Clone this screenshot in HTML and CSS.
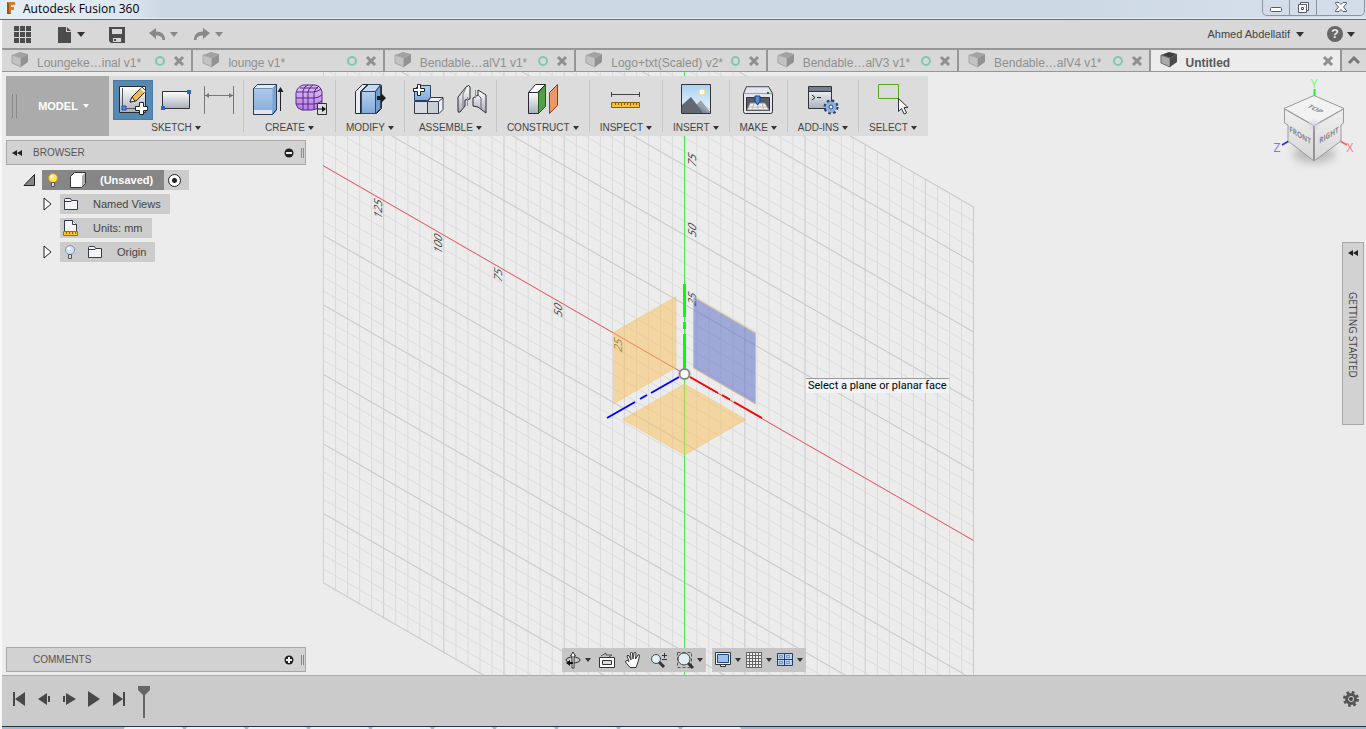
FILE: index.html
```html
<!doctype html>
<html lang="en">

<head>
    <meta charset="utf-8">
    <title>Autodesk Fusion 360</title>
    <link rel="stylesheet" href="styles.css">
</head>

<body>
    <!-- shared shapes -->
    <svg class="defs" aria-hidden="true">
        <defs>
            <linearGradient id="blue" x1="0" y1="0" x2="0" y2="1"><stop offset="0" stop-color="#b4d0ee" /><stop offset="1" stop-color="#83a9d8" /></linearGradient>
            <linearGradient id="steel" x1="0" y1="0" x2="0" y2="1"><stop offset="0" stop-color="#fff" /><stop offset="1" stop-color="#a9afbc" /></linearGradient>
            <linearGradient id="sky" x1="0" y1="0" x2="0" y2="1"><stop offset="0" stop-color="#a9d2ee" /><stop offset="1" stop-color="#eef8fc" /></linearGradient>
            <linearGradient id="purple" x1="0" y1="0" x2="0" y2="1"><stop offset="0" stop-color="#dcc3f0" /><stop offset="1" stop-color="#b67fe6" /></linearGradient>
            <linearGradient id="face" x1="0" y1="0" x2="0" y2="1"><stop offset="0" stop-color="#efefef" /><stop offset="1" stop-color="#d8d8d8" /></linearGradient>
            <symbol id="part" viewBox="0 0 18 16">
                <path d="M1 3 9 0l8 2-7 4z" fill="#a2a2a2" />
                <path d="m1 3 9 3v9l-9-4z" fill="#c2c2c2" stroke="#a5a5a5" />
                <path d="m10 6 7-4v8l-7 5z" fill="#929292" />
            </symbol>
            <symbol id="cross" viewBox="0 0 12 12"><path d="m2 2 8 8m0-8-8 8" stroke="currentColor" stroke-width="3" /></symbol>
            <symbol id="folder" viewBox="0 0 16 16">
                <path d="M1.500 13.500v-10q0-1 1-1h5l1 2h6v9z" fill="#f4f5f8" stroke="#383c46" />
                <path d="M2 5.500h6l1-1" fill="none" stroke="#383c46" />
            </symbol>
        </defs>
    </svg>

    <header class="titlebar">
        <svg class="logo" width="16" height="16" viewBox="0 0 16 16"><path fill="#dff1fa" d="M0 0h16v16H0z" /><path fill="#e0772b" d="M5 2h8v3H9v2h3v3H9v4H5z" /><path fill="#a64d16" d="m5 2 2 2v8l2 2H5z" /></svg>
        <h1>Autodesk Fusion 360</h1>
        <div class="window-buttons">
            <button aria-label="Minimize"><svg width="14" height="12" viewBox="0 0 14 12"><rect x="1.500" y="5.500" width="11" height="4" rx="1" fill="#fff" stroke="#555b6b" /></svg></button>
            <button aria-label="Restore"><svg width="12" height="12" viewBox="0 0 12 12"><g fill="#fff" stroke="#555b6b"><path d="M3.500.5h8v8h-8z" /><path d="M1.500 2.500h8v8h-8z" /><path d="M4.500 5.500h2v2h-2z" /></g></svg></button>
            <button aria-label="Close"><svg width="14" height="12" viewBox="0 0 14 12"><path d="M1.500.5h3.500l2 2 2-2h3.500v1l-3 3.500 3 3.500v1H9l-2-2-2 2H1.500v-1l3-3.500-3-3.500z" fill="#fff" stroke="#555b6b" /></svg></button>
        </div>
    </header>

    <nav class="toolbar" aria-label="Application">
        <button class="apps" aria-label="Data panel"><svg width="17" height="17" viewBox="0 0 17 17"><path fill="#4c4c4c" d="M0 0h5v5H0zm6 0h5v5H6zm6 0h5v5h-5zM0 6h5v5H0zm6 0h5v5H6zm6 0h5v5h-5zM0 12h5v5H0zm6 0h5v5H6zm6 0h5v5h-5z" /></svg></button>
        <button class="drop file" aria-label="File"><svg width="16" height="17" viewBox="0 0 16 17"><path fill="#4c4c4c" d="M1 1h8v5h5v11H1zM10 1l4 4h-4z" /></svg></button>
        <button class="save" aria-label="Save"><svg width="18" height="17" viewBox="0 0 18 17"><path fill="#4c4c4c" d="M1 1h16v16H3l-2-2z" /><path fill="#dadada" d="M4 3h10v5H4zm1 9h8v4H5z" /><path fill="#4c4c4c" d="M6 13h2v2H6z" /></svg></button>
        <button class="drop undo dim" aria-label="Undo"><svg width="18" height="14" viewBox="0 0 18 14"><path fill="#888" d="m1 6 7-5v3.500c6 0 9 3 9 8.500h-2.500c0-3-2-4.500-6.500-4.500V12z" /></svg></button>
        <button class="drop redo dim" aria-label="Redo"><svg width="18" height="14" viewBox="0 0 18 14"><path fill="#888" d="m17 6-7-5v3.500c-6 0-9 3-9 8.500h2.500c0-3 2-4.500 6.500-4.500V12z" /></svg></button>
        <button class="drop user">Ahmed Abdellatif</button>
        <button class="drop help" aria-label="Help"><span class="help-mark">?</span></button>
    </nav>

    <div class="tabs">
        <div class="tab"><svg class="part" width="18" height="16"><use href="#part" /></svg><a href="#">Loungeke…inal v1*</a><i class="dot"></i><button aria-label="Close tab"><svg width="12" height="12"><use href="#cross" /></svg></button></div>
        <div class="tab"><svg class="part" width="18" height="16"><use href="#part" /></svg><a href="#">lounge v1*</a><i class="dot"></i><button aria-label="Close tab"><svg width="12" height="12"><use href="#cross" /></svg></button></div>
        <div class="tab"><svg class="part" width="18" height="16"><use href="#part" /></svg><a href="#">Bendable…alV1 v1*</a><i class="dot"></i><button aria-label="Close tab"><svg width="12" height="12"><use href="#cross" /></svg></button></div>
        <div class="tab"><svg class="part" width="18" height="16"><use href="#part" /></svg><a href="#">Logo+txt(Scaled) v2*</a><i class="dot"></i><button aria-label="Close tab"><svg width="12" height="12"><use href="#cross" /></svg></button></div>
        <div class="tab"><svg class="part" width="18" height="16"><use href="#part" /></svg><a href="#">Bendable…alV3 v1*</a><i class="dot"></i><button aria-label="Close tab"><svg width="12" height="12"><use href="#cross" /></svg></button></div>
        <div class="tab"><svg class="part" width="18" height="16"><use href="#part" /></svg><a href="#">Bendable…alV4 v1*</a><i class="dot"></i><button aria-label="Close tab"><svg width="12" height="12"><use href="#cross" /></svg></button></div>
        <div class="tab active"><svg class="part" width="18" height="16" viewBox="0 0 18 16"><path d="M1 3 9 0l8 2-7 4z" fill="#3d3d3d" /><path d="m1 3 9 3v9l-9-4z" fill="#aaa" stroke="#666" /><path d="m10 6 7-4v8l-7 5z" fill="#4c4c4c" /></svg><a href="#">Untitled</a><button aria-label="Close tab"><svg width="12" height="12"><use href="#cross" /></svg></button></div>
        <button class="more" aria-label="Collapse"><svg width="14" height="9" viewBox="0 0 14 9"><path d="m2 7 5-5 5 5" fill="none" stroke="#777" stroke-width="3" /></svg></button>
    </div>

    <main class="workspace">
        <!-- sketch grid and origin planes -->
        <svg class="scene" viewBox="2 72 1364 603" preserveAspectRatio="xMidYMid slice">
            <g transform="matrix(1 .5765 0 1 684.500 374)" fill="none">
                <path class="fine" d="M-361.500 42.500H289" stroke-width="751" stroke-dasharray="1 11.040" />
                <path class="fine" d="M-36-334.100V417.500" stroke-width="650" stroke-dasharray="1 12.900" />
                <path class="bold upright" d="M-361.700 42.500H289" stroke-width="751" stroke-dasharray="1 59.200" />
                <path class="bold" d="M-36-278.500V418" stroke-width="650" stroke-dasharray="1 68.500" />
                <path class="bold" d="M-361-333.600H289V450" stroke-width="1" />
            </g>
            <path d="M323 165.500 973.500 540.500" stroke="#f25c5c" />
            <path d="M684.500 72v603" stroke="#54e354" />
            <g class="scale">
                <text transform="matrix(0 -1 1 .577 382 220)">125</text>
                <text transform="matrix(0 -1 1 .577 442 255)">100</text>
                <text transform="matrix(0 -1 1 .577 502 283)">75</text>
                <text transform="matrix(0 -1 1 .577 562 318)">50</text>
                <text transform="matrix(0 -1 1 .577 622 353)">25</text>
                <text transform="matrix(0 -1 1 .577 696 168)">75</text>
                <text transform="matrix(0 -1 1 .577 696 238)">50</text>
                <text transform="matrix(0 -1 1 .577 696 307)">25</text>
            </g>
            <g fill="#f7be55" fill-opacity=".5" stroke="#f3c77c" stroke-opacity=".5">
                <path d="m613.500 332.500 62.500-36v71l-62.500 36.500z" />
                <path d="m684.500 384 61.500 35.500-61.500 35.500-62-35.500z" />
            </g>
            <path d="m693.500 297 62 36v71l-62-36z" fill="#4f66c4" fill-opacity=".5" stroke="#d8bf93" />
            <g fill="none" stroke-width="2">
                <path d="M684.500 284v33m0 5v7m0 5v35" stroke="#0f0" stroke-width="3" />
                <path d="m607 418 28-16m5-3 7-4m4-2 28-16" stroke="#00f" />
                <path d="m690 377 28 16m4 2 8 4.500m4 2.500 28 16" stroke="red" />
            </g>
            <circle cx="684.500" cy="374" r="5" fill="#fff" stroke="#888" stroke-width="2" />
        </svg>

        <div class="ribbon">
            <button class="workspace-switch drop">MODEL</button>
            <section class="group">
                <div class="tools">
                    <button class="on" aria-label="Create sketch"><svg width="32" height="32" viewBox="0 0 32 32"><path d="M2.500 2.500h26v26h-26z" fill="url(#steel)" stroke="#252a35" /><path d="M5.500 4v20M8 24.500h16" stroke="#555" /><path d="M5 22h4v4H5z" fill="#5590dd" stroke="#1e4fa0" /><path d="m13 18 2-5L25 3l4 4-10 10z" fill="#f4b942" stroke="#2d2923" /><path d="m24 4 4 4" stroke="#eee" stroke-width="2" /><path d="m13 18 2-5 3 4z" fill="#fff3d0" stroke="#333" /><path d="M22.500 18.500h4v4h4v4h-4v4h-4v-4h-4v-4h4z" fill="#fff" stroke="#222" /></svg></button>
                    <button aria-label="Rectangle"><svg width="32" height="32" viewBox="0 0 32 32"><path d="M2.500 7.500h27v17h-27z" fill="url(#steel)" stroke="#333" /><path d="M27 6h4v4h-4zM1 22h4v4H1z" fill="#2d63c8" /></svg></button>
                    <button aria-label="Sketch dimension"><svg width="32" height="32" viewBox="0 0 32 32"><path d="M1.500 2v28m29-28v28M2 11.500h28" stroke="#777" fill="none" /><path d="m2 11.500 4-2.500v5zm28 0L26 9v5z" fill="#777" /></svg></button>
                </div>
                <button class="drop label">SKETCH</button>
            </section>
            <section class="group">
                <div class="tools">
                    <button aria-label="Extrude"><svg width="32" height="32" viewBox="0 0 32 32"><path d="m1.500 4.500 4-4h19v25l-4 5h-19z" fill="url(#blue)" stroke="#283a57" /><path d="m1.500 4.500 4-4h19l-4 4z" fill="#deebf8" stroke="#7890ae" /><path d="m20.500 5 3.500-4v24l-3.500 4z" fill="#7ca3d3" /><path d="M2 26h18v4H2z" fill="#e4e6ea" /><path d="m1.500 4.500 4-4h19v25l-4 5h-19z" fill="none" stroke="#283a57" /><path d="M28.500 27V7" stroke="#222" /><path d="m28.500 3 3 5h-6z" fill="#222" /></svg></button>
                    <button aria-label="Create form"><svg width="32" height="32" viewBox="0 0 32 32"><path d="M8 1h12q6 1 7 7v10q-1 6-6 7l-4 1H7q-5-1-6-6V9q1-6 7-8z" fill="url(#purple)" stroke="#5b248f" /><path d="M2 8h16q4 0 8-3M1 14h18q4 0 8-3M1 20h18q4 0 8-3M8 26V7q1-5 5-6M13 26V8q1-5 5-7M19 26V9q1-5 5-7M5 4h18" fill="none" stroke="#5b248f" /><path d="M22.500 19.500h9v11h-9z" fill="#ddd" stroke="#333" /><path d="M23 25h5" stroke="#111" /><path d="m27 22 4 3-4 3z" fill="#111" /></svg></button>
                </div>
                <button class="drop label">CREATE</button>
            </section>
            <section class="group">
                <div class="tools">
                    <button aria-label="Press pull"><svg width="32" height="32" viewBox="0 0 32 32"><path d="m1.500 7.500 7-7h17l2 1v23l-5 5h-21z" fill="#e8edf4" stroke="#252a35" /><path d="M6.500 29V7.500l7-7" fill="none" stroke="#252a35" /><path d="M7.500 7.500h14v22h-14z" fill="url(#blue)" stroke="#33465f" /><path d="m7.500 7.500 7-7h12l-5 7z" fill="#c5daf0" stroke="#33465f" /><path d="m21.500 7.500 5-6v23l-5 5z" fill="#739cd0" stroke="#33465f" /><path d="M23 12h4V9l5 5-5 5v-3h-4z" fill="#1c1c1c" /></svg></button>
                </div>
                <button class="drop label">MODIFY</button>
            </section>
            <section class="group">
                <div class="tools">
                    <button aria-label="New component"><svg width="32" height="32" viewBox="0 0 32 32"><path d="m1.500 5.500 4-4h12v12l-3 3h-13z" fill="url(#blue)" stroke="#26446f" /><path d="M1.500 17.500h13v12h-13z" fill="#d7dae2" stroke="#333b48" /><path d="M14.500 17.500 18 13.500h12v12l-4 4H14.500z" fill="#eef0f4" stroke="#333b48" /><path d="M14.500 17.500h11v12h-11zM26 17l4-3" fill="#c9cdd6" stroke="#333b48" /><path d="M4.500.5h3v4h4v3h-4v4h-3v-4h-4v-3h4z" fill="#fff" stroke="#222" /></svg></button>
                    <button aria-label="Joint"><svg width="32" height="32" viewBox="0 0 32 32"><path d="m2 13 8-10q3-3 4 0v12l-5 1v6l-5 6q-2 1-2-1z" fill="url(#steel)" stroke="#252a35" /><path d="m10 4-3 6v13" stroke="#777" fill="none" /><path d="m22 6 8 5v18l-8-6-5-1v-8l5-3z" fill="url(#steel)" stroke="#252a35" /><path d="m22 11 3 3v11" stroke="#666" fill="none" /><path d="M11.500 13v9M19.500 6v8" stroke="#e87518" /></svg></button>
                </div>
                <button class="drop label">ASSEMBLE</button>
            </section>
            <section class="group">
                <div class="tools">
                    <button aria-label="Offset plane"><svg width="32" height="32" viewBox="0 0 32 32"><path d="m1.500 8.500 7-8h10l-8 8z" fill="#fff" stroke="#252a35" /><path d="M1.500 8.500h10v21h-10z" fill="url(#steel)" stroke="#252a35" /><path d="m11.500 8.500 7-8v22l-7 7z" fill="#55a047" stroke="#245b1c" /><path d="m22.500 8.500 8-8v21l-8 8z" fill="#ec9765" stroke="#8b401a" /></svg></button>
                </div>
                <button class="drop label">CONSTRUCT</button>
            </section>
            <section class="group">
                <div class="tools">
                    <button aria-label="Measure"><svg width="32" height="32" viewBox="0 0 32 32"><path d="M1.500 8v5m28-5v5M2 10.500h27" stroke="#444" /><path d="M1.500 18.500h28v5h-28z" fill="#f4c52e" stroke="#8e5a0b" /><path d="M5.500 19v2m3-2v2m3-2v3m3-3v2m3-2v2m3-2v3m3-3v2m3-2v2" stroke="#8e5a0b" /></svg></button>
                </div>
                <button class="drop label">INSPECT</button>
            </section>
            <section class="group">
                <div class="tools">
                    <button aria-label="Insert image"><svg width="32" height="32" viewBox="0 0 32 32"><path d="M1.500.5h29v29h-29z" fill="url(#sky)" /><circle cx="22" cy="8" r="3" fill="#fff" stroke="#f8dc79" /><path d="m15 22 6-6 9 10v4H12z" fill="#98a1b1" /><path d="m21 16 9 11" stroke="#e9edf2" /><path d="m2 21 9-8 13 17H2z" fill="#626772" /><path d="m11 13 13 17h6L14 18z" fill="#858c99" /><path d="M1.500.5h29v29h-29z" fill="none" stroke="#30343c" /></svg></button>
                </div>
                <button class="drop label">INSERT</button>
            </section>
            <section class="group">
                <div class="tools">
                    <button aria-label="3D print"><svg width="32" height="32" viewBox="0 0 32 32"><path d="m1.500 9.500 3-7h22l4 7v18q0 2-2 2h-25q-2 0-2-2z" fill="#e2e5eb" stroke="#30343c" /><path d="M2 9.500h28M5 3h21" stroke="#9ba0aa" /><path d="M4.500 13.500h23v13h-23z" fill="#555b66" stroke="#30343c" /><path d="m8 19-3 7h22l-4-7z" fill="#eee" stroke="#888" /><path d="M7 23h18M12 19l-2 7m6-7v7m4-7 2 7" stroke="#bbb" /><path d="M13 12h5v5l-2.500 4-2.500-4z" fill="#4b8fde" stroke="#153f7c" /><path d="M25 8h2v2h-2z" fill="#087c19" /></svg></button>
                </div>
                <button class="drop label">MAKE</button>
            </section>
            <section class="group">
                <div class="tools">
                    <button aria-label="Scripts and add-ins"><svg width="32" height="32" viewBox="0 0 32 32"><path d="M1.500 2.500h23v22h-23z" fill="url(#steel)" stroke="#30343c" /><path d="M2 3h22v4H2z" fill="#777e8d" /><path d="M2 7.500h22" stroke="#30343c" /><path d="m5 11 3 2.500L5 16m5-2.500h4" fill="none" stroke="#222" /><circle cx="24" cy="23" r="5" fill="#a8c6ed" stroke="#23416f" stroke-width="5" stroke-dasharray="2 1.930" /><circle cx="24" cy="23" r="5" fill="#a8c6ed" stroke="#23416f" /><circle cx="24" cy="23" r="4" fill="none" stroke="#8db0df" stroke-width="3" /><circle cx="24" cy="23" r="2" fill="#fff" stroke="#23416f" /></svg></button>
                </div>
                <button class="drop label">ADD-INS</button>
            </section>
            <section class="group">
                <div class="tools">
                    <button aria-label="Select"><svg width="32" height="32" viewBox="0 0 32 32"><path d="M1.500.5h20v14h-20z" fill="none" stroke="#58a515" /><path d="M21.500 14.500v13l3-3 2.500 5.500 2.500-1-2.500-5.500h4z" fill="#f7f7f7" stroke="#30343c" /></svg></button>
                </div>
                <button class="drop label">SELECT</button>
            </section>
        </div>

        <svg class="viewcube" width="88" height="96" viewBox="1270 76 88 96">
            <ellipse cx="1314" cy="154" rx="21" ry="9" fill="#bbb" class="shadow" />
            <path d="M1314.500 89v7" stroke="#2eea2e" stroke-width="2" />
            <path d="m1282 145 7-4" stroke="#33e" stroke-width="2" />
            <path d="m1340 141 7 4" stroke="#e66" stroke-width="2" />
            <path d="m1284 108.500 30-13 30 13-30 17z" fill="#f2f2f2" stroke="#999" />
            <path d="m1284.500 109 29.500 17v35l-26-20v-16l-3.500-2z" fill="url(#face)" stroke="#999" />
            <path d="M1343.500 109 1314 126v35l27-20v-16l2.500-2z" fill="url(#face)" stroke="#999" />
            <path d="m1314 119 5 3v7l-5 3-5-3v-7z" fill="#d7dae4" fill-opacity=".6" />
            <path d="M1314 126v34" stroke="#777" />
            <g class="faces">
                <text transform="matrix(.85 .4 -.8 .4 1313 110)">TOP</text>
                <text transform="matrix(.8 .48 0 1 1300 138)">FRONT</text>
                <text transform="matrix(.8 -.48 0 1 1329 138)">RIGHT</text>
            </g>
            <g class="axes"><text x="1314" y="88" fill="#6efa6e">Y</text><text x="1277" y="152" fill="#7676f2">Z</text><text x="1350" y="152" fill="#f57c7c">X</text></g>
        </svg>

        <div class="middle">
            <aside class="browser">
                <div class="panel">
                    <button aria-label="Hide browser"><svg width="12" height="8" viewBox="0 0 12 8"><path d="m6 1-5 3 5 3zm5 0L6 4l5 3z" fill="#222" /></svg></button>
                    <h2>BROWSER</h2>
                    <button aria-label="Collapse all"><svg width="10" height="10" viewBox="0 0 10 10"><circle cx="5" cy="5" r="4.500" fill="#222" /><path d="M2 5h6" stroke="#eee" stroke-width="2" /></svg></button>
                    <i class="grip"></i>
                </div>
                <ul class="tree">
                    <li class="root">
                        <button class="twist" aria-label="Collapse"><svg width="12" height="12" viewBox="0 0 12 12"><path d="M11.500.5v11H1z" fill="#888" stroke="#222" /></svg></button>
                        <span class="node selected">
                            <svg class="bulb" width="14" height="16" viewBox="0 0 14 16"><circle cx="7" cy="6" r="4.500" fill="#ffe55c" stroke="#c99c10" /><path d="M5.500 10.500h3v4h-3z" fill="#ddd" stroke="#555" /><circle cx="6" cy="4.500" r="1.500" fill="#fff" /></svg>
                            <svg class="box" width="16" height="16" viewBox="0 0 16 16"><path d="m.5 4.500 4-4h11v11l-4 4H.5z" fill="#fff" stroke="#333" /><path d="m12 4 3-3v10l-3 4z" fill="#aaa" /></svg>
                            <b>(Unsaved)</b>
                        </span>
                        <label class="activate"><input type="radio" checked aria-label="Activate component"></label>
                    </li>
                    <li>
                        <button class="twist" aria-label="Expand"><svg width="12" height="14" viewBox="0 0 12 14"><path d="M2 1v12l7-6z" fill="#fff" stroke="#222" /></svg></button>
                        <span class="node"><svg width="16" height="16"><use href="#folder" /></svg><span class="text">Named Views</span></span>
                    </li>
                    <li>
                        <i class="twist"></i>
                        <span class="node"><svg width="16" height="16" viewBox="0 0 16 16"><path d="M1.500 11.500V.5h8l4 4v7z" fill="#f7f7fa" stroke="#333a48" /><path d="M9.500.5v4h4" fill="#fff" stroke="#333a48" /><path d="M.5 11.500h14v4H.5z" fill="#f9c62b" stroke="#a86b06" /><path d="M3.500 12v2m3-2v2m3-2v2m3-2v2" stroke="#8e5a0b" /></svg><span class="text">Units: mm</span></span>
                    </li>
                    <li>
                        <button class="twist" aria-label="Expand"><svg width="12" height="14" viewBox="0 0 12 14"><path d="M2 1v12l7-6z" fill="#fff" stroke="#222" /></svg></button>
                        <span class="node"><svg class="bulb" width="14" height="16" viewBox="0 0 14 16"><circle cx="7" cy="6" r="4.500" fill="#cfe0fb" stroke="#7c94c4" /><path d="M5.500 10.500h3v4h-3z" fill="#ddd" stroke="#555" /><circle cx="6" cy="4.500" r="1.500" fill="#fff" /></svg><svg class="after-bulb" width="16" height="16"><use href="#folder" /></svg><span class="text">Origin</span></span>
                    </li>
                </ul>
            </aside>
            <button class="getting-started"><svg width="12" height="8" viewBox="0 0 12 8"><path d="m6 1-5 3 5 3zm5 0L6 4l5 3z" fill="#222" /></svg><span>GETTING STARTED</span></button>
        </div>

        <div class="tooltip" role="tooltip">Select a plane or planar face</div>

        <div class="bottom">
            <div class="panel comments">
                <h2>COMMENTS</h2>
                <button aria-label="Add comment"><svg width="10" height="10" viewBox="0 0 10 10"><circle cx="5" cy="5" r="4.500" fill="#222" /><path d="M2 5h6M5 2v6" stroke="#eee" stroke-width="2" /></svg></button>
                <i class="grip"></i>
            </div>
            <div class="navigation">
                <div class="bar">
                    <button class="drop" aria-label="Orbit"><svg width="18" height="18" viewBox="0 0 18 18"><ellipse cx="9" cy="9" rx="7" ry="3" fill="none" stroke="#333" /><path d="M8 17V5H6.500l2.500-4 2.500 4H10v12z" fill="#fff" stroke="#333" /><path d="m2 12 4-3v2h3v2H6v2z" fill="#111" /></svg></button>
                    <button aria-label="Look at"><svg width="18" height="18" viewBox="0 0 18 18"><path d="M1.500 6.500h15v10h-15z" fill="#fff" stroke="#333" /><path d="M4.500 9.500h9v4h-9z" fill="#d5dce3" stroke="#333" /><path d="m3 5 5-3v2h6l-3 2" fill="#b9c7d2" stroke="#555" /></svg></button>
                    <button aria-label="Pan"><svg width="18" height="18" viewBox="0 0 18 18"><path d="M6 16.500 1.500 11q0-2 2-1.500L5 10.500 3 5q1-2 2 0l2 4-.5-7q1-2 2 0L9 8l1-6q1.500-1.500 2 0l-.5 6L14 4q1.500-1 1.500 1L14 11l-2 5.500z" fill="#fff" stroke="#333" /></svg></button>
                    <button aria-label="Zoom"><svg width="18" height="18" viewBox="0 0 18 18"><path d="m9 11 5 5" stroke="#333" stroke-width="3" /><circle cx="6" cy="8" r="4.500" fill="#e2f1f5" stroke="#444" /><path d="M12 4.500h5M14.500 2v5M12 8.500h5" stroke="#333" /></svg></button>
                    <button class="drop" aria-label="Fit"><svg width="18" height="18" viewBox="0 0 18 18"><path d="M1.500 1.500h14v15h-14z" fill="none" stroke="#555" stroke-dasharray="3 2" /><path d="m12 12 5 5" stroke="#333" stroke-width="3" /><circle cx="8" cy="8" r="6" fill="#dfeff1" stroke="#444" /></svg></button>
                </div>
                <div class="bar views">
                    <button class="drop" aria-label="Display settings"><svg width="18" height="18" viewBox="0 0 18 18"><path d="M1.500 1.500h15v12h-15z" fill="#eee" stroke="#333" /><path d="M3.500 3.500h11v8h-11z" fill="#9cc0ea" stroke="#1d4684" /><path d="M6.500 13.500h5v2h-5z" fill="#fff" stroke="#333" /></svg></button>
                    <button class="drop" aria-label="Grid settings"><svg width="18" height="18" viewBox="0 0 18 18"><path d="M1.500 1.500h15v15h-15z" fill="#f3f3f5" /><path d="M1.500 1v16m3-16v16m3-16v16m3-16v16m3-16v16m3-16v16M1 1.500h16m-16 3h16m-16 3h16m-16 3h16m-16 3h16m-16 3h16" stroke="#666" /></svg></button>
                    <button class="drop" aria-label="Viewports"><svg width="18" height="18" viewBox="0 0 18 18"><g fill="#bcd3f0" stroke="#1f3f72"><path d="M1.500 2.500h7v6h-7zm7 0h8v6h-8zm-7 6h7v6h-7zm7 0h8v6h-8z" /></g><path d="M3.500 4.500h3v2h-3zm7 0h3v2h-3zm-7 6h3v2h-3zm7 0h3v2h-3z" fill="none" stroke="#7097cb" /></svg></button>
                </div>
            </div>
        </div>
    </main>

    <footer class="timeline">
        <button aria-label="Start"><svg width="16" height="16" viewBox="0 0 16 16"><path d="M2 1h2v14H2zm12 0v14L4 8z" /></svg></button>
        <button aria-label="Step back"><svg width="16" height="16" viewBox="0 0 16 16"><path d="M11 2v12L2 8zm1 3h2v6h-2z" /></svg></button>
        <button aria-label="Step forward"><svg width="16" height="16" viewBox="0 0 16 16"><path d="M5 2v12l10-6zM2 5h2v6H2z" /></svg></button>
        <button aria-label="Play"><svg width="16" height="16" viewBox="0 0 16 16"><path d="M2 0v16l12-8z" /></svg></button>
        <button aria-label="End"><svg width="16" height="16" viewBox="0 0 16 16"><path d="M12 1h2v14h-2zM2 1v14l10-7z" /></svg></button>
        <svg class="marker" width="12" height="32" viewBox="0 0 12 32"><path d="M0 0h12v4L7 9v23H5V9L0 4z" /></svg>
        <button class="settings" aria-label="Timeline settings"><svg width="16" height="16" viewBox="0 0 16 16"><circle cx="8" cy="8" r="6.500" fill="none" stroke="#555" stroke-width="3" stroke-dasharray="2.600 2.505" /><circle cx="8" cy="8" r="4.500" fill="none" stroke="#555" stroke-width="3" /><circle cx="8" cy="8" r="2" /></svg></button>
    </footer>
    <div class="taskbar"><i></i><i></i><i></i><i></i><i></i><i></i><i></i><i></i><i></i><i></i></div>
</body>

</html>
```
FILE: styles.css
```css
* {
    box-sizing: border-box;
}

body {
    margin: 0;
    padding-left: 2px;
    height: 100vh;
    display: flex;
    flex-direction: column;
    overflow: hidden;
    background: #f8f8f8;
    color: #444;
    font: 11px "Liberation Sans", Arial, sans-serif;
}

button {
    display: flex;
    align-items: center;
    justify-content: center;
    padding: 0;
    border: 0;
    background: none;
    color: inherit;
    font: inherit;
}

svg {
    display: block;
    flex: none;
}

h1,
h2 {
    margin: 0;
    font-size: 10px;
    font-weight: normal;
}

.defs {
    position: absolute;
    width: 0;
    height: 0;
}

/* small triangle after every menu button */
.drop::after {
    content: "";
    margin-left: 4px;
    border: 4px solid transparent;
    border-top: 5px solid #333;
    border-bottom: 0;
}

.dim::after {
    border-top-color: #888;
}

/* window title */
.titlebar {
    display: flex;
    align-items: flex-start;
    height: 20px;
    margin-left: -2px;
    padding-left: 2px;
    border-bottom: 1px solid #656b76;
    background: linear-gradient(90deg, #e6edf5, #dde6f0 130px, #cdd8e5 160px, #cdd8e5 1060px, #d7e1ed);
    box-shadow: inset 0 -1px #e9eef4;
    color: #000;
}

.logo {
    margin-right: 5px;
}

.titlebar h1 {
    font: 12px/18px "Open Sans", sans-serif;
}

.window-buttons {
    display: flex;
    margin-left: auto;
    margin-right: 1px;
    border: 1px solid #8b94a3;
    border-top: 0;
    border-radius: 0 0 5px 5px;
    background: #d3dde9;
}

.window-buttons button {
    width: 27px;
    height: 15px;
    border-right: 1px solid #8b94a3;
}

.window-buttons button:last-child {
    width: 47px;
    border-right: 0;
}

/* application toolbar */
.toolbar {
    display: flex;
    align-items: center;
    height: 30px;
    padding: 0 11px 0 12px;
    border-bottom: 2px solid #969696;
    background: #d8d8d8;
}

.file {
    margin-left: 26px;
}

.save {
    margin-left: 23px;
}

.undo {
    margin-left: 22px;
}

.redo {
    margin-left: 15px;
}

.user {
    margin-left: auto;
}

.user::after {
    margin-left: 6px;
}

.help {
    margin-left: 23px;
}

.help-mark {
    width: 16px;
    height: 16px;
    border-radius: 50%;
    background: #666;
    color: #e8e8e8;
    font: bold 13px/16px "Liberation Sans", sans-serif;
}

/* document tabs */
.tabs {
    display: flex;
    height: 22px;
    border-bottom: 1px solid #969696;
    background: #d8d8d8;
}

.tab {
    display: flex;
    flex: 1;
    min-width: 0;
    align-items: center;
    gap: 8px;
    padding: 0 6px 0 9px;
    border-right: 2px solid #969696;
    color: #8f8f8f;
    font-size: 12px;
}

.tab a {
    flex: 1;
    padding-top: 4px;
    color: inherit;
    text-decoration: none;
    white-space: nowrap;
}

.part {
    margin-bottom: 2px;
}

.tab.active {
    background: #ececec;
}

.tab.active a {
    color: #5a5a5a;
    font-weight: bold;
}

.dot {
    width: 10px;
    height: 10px;
    border: 2px solid #7fc7b5;
    border-radius: 50%;
}

.more {
    width: 24px;
}

/* modelling area */
.workspace {
    position: relative;
    display: flex;
    flex: 1;
    flex-direction: column;
    min-height: 0;
    padding: 4px 4px 3px;
    background: #ececec;
}

.scene {
    position: absolute;
    inset: 0;
    width: 100%;
    height: 100%;
}

.fine {
    stroke: #dbdbdb;
}

.bold {
    stroke: #c9c9c9;
}

.upright {
    stroke: #d2d2d2;
}

.scale {
    fill: #444;
    font: 11px "Open Sans", sans-serif;
}

.ribbon,
.middle,
.bottom {
    position: relative;
}

.ribbon {
    display: flex;
    align-self: flex-start;
    height: 60px;
    background: #dcdcdc;
}

.workspace-switch {
    width: 103px;
    padding-left: 12px;
    background: linear-gradient(90deg, transparent 6px, #888 6px, #888 7px, transparent 7px, transparent 10px, #888 10px, #888 11px, transparent 11px) 0 18px / 100% 24px no-repeat #ababab;
    color: #fff;
    font-weight: bold;
}

.workspace-switch::after {
    margin-left: 5px;
    border-width: 4px 3px 0;
    border-top-color: #fff;
}

.group {
    padding: 4px 5px 0 4px;
    background: linear-gradient(#c6c6c6, #c6c6c6) right 4px / 1px 52px no-repeat;
}

.group:last-child {
    background: none;
}

.tools {
    display: flex;
    justify-content: center;
    gap: 3px;
}

.tools button {
    width: 40px;
    height: 40px;
}

.tools .on {
    border: 1px solid #4b7ba5;
    background: #5588b3;
}

.label {
    width: 100%;
    padding: 0 6px;
    font-size: 10px;
    line-height: 15px;
}

.label::after {
    margin-left: 3px;
    border-width: 4px 3px 0;
}

.viewcube {
    position: absolute;
    top: 4px;
    right: 8px;
}

.shadow {
    filter: blur(4px);
}

.faces {
    fill: #85898f;
    font: bold 8px "Open Sans", sans-serif;
    text-anchor: middle;
}

.axes {
    font: 12px "Open Sans", sans-serif;
    text-anchor: middle;
}

.middle {
    display: flex;
    flex: 1;
    align-items: flex-start;
    justify-content: space-between;
    margin-right: -2px;
    padding-top: 4px;
}

.browser {
    width: 300px;
}

.panel {
    display: flex;
    align-items: center;
    height: 25px;
    padding: 0 1px 0 4px;
    border: 1px solid #a8a8a8;
    background: #d2d2d2;
    color: #555;
}

.panel h2 {
    flex: 1;
    padding-left: 10px;
}

.comments h2 {
    padding-left: 22px;
}

.grip {
    width: 3px;
    height: 10px;
    margin-left: 7px;
    border: 1px solid #888;
    border-width: 0 1px;
}

.tree {
    display: grid;
    gap: 4px;
    margin: 5px 0 0;
    padding: 0 0 0 36px;
    list-style: none;
}

.tree li {
    display: flex;
    height: 20px;
}

.tree .root {
    margin-left: -20px;
}

.twist {
    width: 18px;
}

.root .twist {
    width: 20px;
}

.tree .twist svg {
    margin-right: 7px;
}

.node {
    display: flex;
    align-items: center;
    padding: 0 9px 0 3px;
    background: #ccc;
}

.node .text {
    padding-left: 14px;
}

.after-bulb {
    margin-left: 10px;
}

.selected {
    padding: 0 11px 0 4px;
    background: #868686;
    color: #fff;
}

.selected .box {
    margin: 0 14px 0 10px;
}

.activate {
    display: flex;
    align-items: center;
    width: 25px;
    background: #ccc;
}

.activate input {
    appearance: none;
    width: 13px;
    height: 13px;
    margin: 0 0 0 4px;
    border: 1px solid #222;
    border-radius: 50%;
    background: radial-gradient(circle, #222 2px, #fff 3px);
}

.getting-started {
    flex-direction: column;
    justify-content: flex-start;
    gap: 35px;
    width: 22px;
    height: 183px;
    margin-top: 102px;
    padding-top: 6px;
    border: 1px solid #a8a8a8;
    background: #d2d2d2;
    font: 10px "Open Sans", sans-serif;
}

.getting-started span {
    writing-mode: vertical-rl;
}

.tooltip {
    position: absolute;
    top: calc(50% + 4px);
    left: calc(50% + 122px);
    padding: 0 2px;
    border-top: 1px solid #999;
    background: #f1f3f7;
    color: #000;
    font: 11px/14px Roboto, sans-serif;
}

.bottom {
    display: grid;
    grid-template-columns: 300px 1fr 300px;
    align-items: center;
}

.navigation {
    display: flex;
    justify-content: center;
    gap: 6px;
}

.bar {
    display: flex;
    gap: 8px;
    height: 24px;
    padding: 0 4px 0 2px;
    background: #c6c6c6;
}

.bar .drop {
    margin-right: -1px;
}

.bar .drop::after {
    margin-left: 3px;
    border-width: 4px 3px 0;
}

.bar.views {
    gap: 5px;
}

/* history timeline */
.timeline {
    display: flex;
    align-items: center;
    gap: 9px;
    height: 51px;
    padding: 0 7px 4px 9px;
    border-top: 1px solid #aaa;
    background: #cbcbcb;
    fill: #484848;
}

.marker {
    margin: 6px 0 0 2px;
    fill: #666;
}

.settings {
    margin-left: auto;
}

.taskbar {
    display: flex;
    gap: 3px;
    height: 3px;
    padding-left: 122px;
    border-top: 1px solid #273340;
    background: #9fb9d2;
}

.taskbar i {
    width: 59px;
    border-radius: 2px 2px 0 0;
    background: #eaf2fa;
}
```
